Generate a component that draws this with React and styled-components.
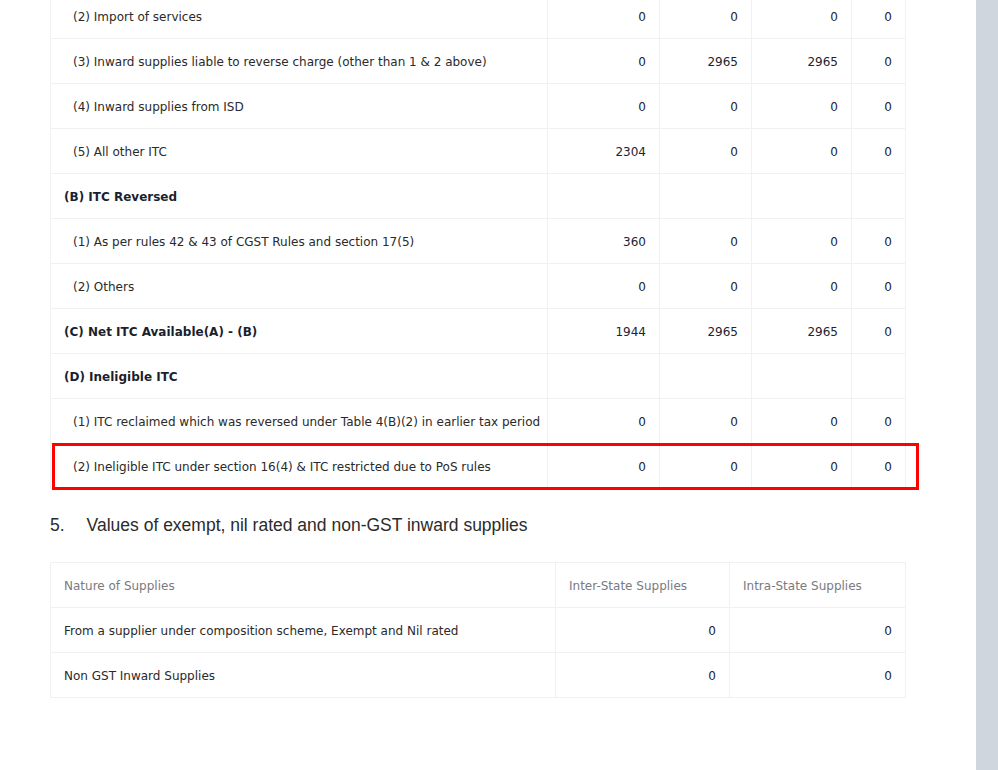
import React from 'react';
import styled, { createGlobalStyle } from 'styled-components';

const GlobalStyle = createGlobalStyle`
  html, body {
    margin: 0;
    padding: 0;
    background: #fff;
    overflow: hidden;
  }
  body {
    font-family: Tahoma, "DejaVu Sans", "Liberation Sans", sans-serif;
    color: #222;
  }
`;

const itcRows = [
  { label: '(2) Import of services', sub: true, values: [0, 0, 0, 0] },
  { label: '(3) Inward supplies liable to reverse charge (other than 1 & 2 above)', sub: true, values: [0, 2965, 2965, 0] },
  { label: '(4) Inward supplies from ISD', sub: true, values: [0, 0, 0, 0] },
  { label: '(5) All other ITC', sub: true, values: [2304, 0, 0, 0] },
  { label: '(B) ITC Reversed', head: true },
  { label: '(1) As per rules 42 & 43 of CGST Rules and section 17(5)', sub: true, values: [360, 0, 0, 0] },
  { label: '(2) Others', sub: true, values: [0, 0, 0, 0] },
  { label: '(C) Net ITC Available(A) - (B)', bold: true, values: [1944, 2965, 2965, 0] },
  { label: '(D) Ineligible ITC', head: true },
  { label: '(1) ITC reclaimed which was reversed under Table 4(B)(2) in earlier tax period', sub: true, values: [0, 0, 0, 0] },
  { label: '(2) Ineligible ITC under section 16(4) & ITC restricted due to PoS rules', sub: true, values: [0, 0, 0, 0] },
];

const exemptRows = [
  { label: 'From a supplier under composition scheme, Exempt and Nil rated', values: [0, 0] },
  { label: 'Non GST Inward Supplies', values: [0, 0] },
];

const App = () => {
  return (
    <Page>
      <GlobalStyle />
      <Main>
        <TableWrap>
          <DataTable>
            <colgroup>
              <col style={{ width: 497 }} />
              <col style={{ width: 112 }} />
              <col style={{ width: 92 }} />
              <col style={{ width: 100 }} />
              <col style={{ width: 54 }} />
            </colgroup>
            <tbody>
              {itcRows.map((row, i) => (
                <tr key={i}>
                  <LabelCell $sub={row.sub} $bold={row.head || row.bold}>
                    {row.label}
                  </LabelCell>
                  {row.head
                    ? [0, 1, 2, 3].map((k) => <NumCell key={k} />)
                    : row.values.map((v, k) => <NumCell key={k}>{v}</NumCell>)}
                </tr>
              ))}
            </tbody>
          </DataTable>
          <Highlight />
        </TableWrap>

        <SectionTitle>
          <span>5.</span>
          <span>Values of exempt, nil rated and non-GST inward supplies</span>
        </SectionTitle>

        <DataTable>
          <colgroup>
            <col style={{ width: 505 }} />
            <col style={{ width: 174 }} />
            <col style={{ width: 176 }} />
          </colgroup>
          <thead>
            <tr>
              <HeadCell>Nature of Supplies</HeadCell>
              <HeadCell>Inter-State Supplies</HeadCell>
              <HeadCell>Intra-State Supplies</HeadCell>
            </tr>
          </thead>
          <tbody>
            {exemptRows.map((row, i) => (
              <tr key={i}>
                <LabelCell>{row.label}</LabelCell>
                {row.values.map((v, k) => (
                  <NumCell key={k}>{v}</NumCell>
                ))}
              </tr>
            ))}
          </tbody>
        </DataTable>
      </Main>
      <Gutter />
    </Page>
  );
};

const Page = styled.div`
  display: flex;
  height: 770px;
  width: 998px;
`;

const Main = styled.div`
  flex: 1;
  padding-left: 50px;
`;

const Gutter = styled.div`
  width: 22px;
  background-color: #cfd6dd;
`;

const TableWrap = styled.div`
  position: relative;
  width: 855px;
  margin-top: -7px;
`;

const DataTable = styled.table`
  width: 855px;
  border-collapse: collapse;
  table-layout: fixed;
  font-size: 12px;

  td, th {
    border: 1px solid #f0f1f3;
    height: 45px;
    box-sizing: border-box;
    padding: 2px 13px 0;
    vertical-align: middle;
  }
`;

const LabelCell = styled.td`
  padding-left: ${(p) => (p.$sub ? '22px' : '13px')} !important;
  font-weight: ${(p) => (p.$bold ? 700 : 400)};
  color: ${(p) => (p.$bold ? '#1c1f2e' : '#2a2a2a')};
  white-space: nowrap;
`;

const NumCell = styled.td`
  text-align: right;
  color: #23232f;
`;

const HeadCell = styled.th`
  text-align: left;
  font-weight: 400;
  color: #7a7a80;
`;

const Highlight = styled.div`
  position: absolute;
  left: 2px;
  right: -14px;
  bottom: -1px;
  height: 47px;
  border: 3px solid #ff0000;
  box-sizing: border-box;
  pointer-events: none;
`;

const SectionTitle = styled.h2`
  display: flex;
  gap: 22px;
  margin: 21px 0 22px;
  line-height: 30px;
  font-family: "Liberation Sans", Arial, sans-serif;
  font-size: 17.5px;
  font-weight: 400;
  color: #2b2b2b;
`;

export default App;
